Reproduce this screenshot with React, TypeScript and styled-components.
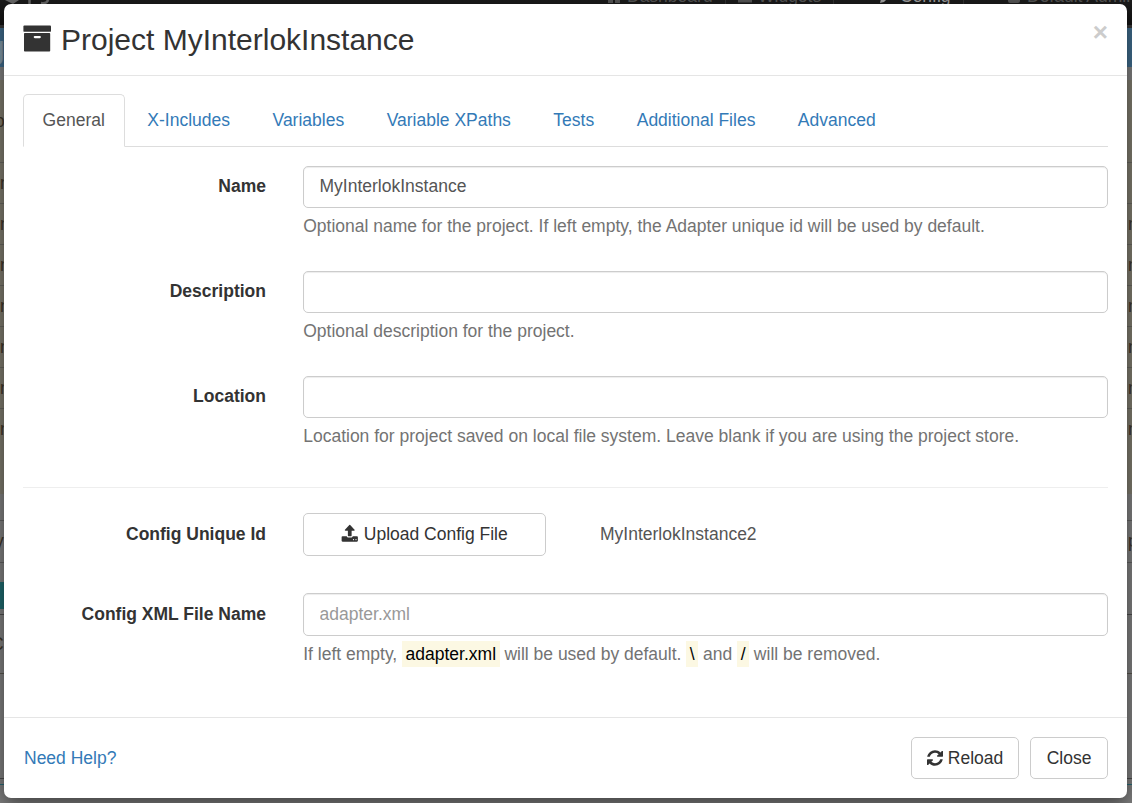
import React from "react";
import styled, { createGlobalStyle, css } from "styled-components";

const Global = createGlobalStyle`
  * { box-sizing: border-box; }
  html, body { margin: 0; overflow: hidden; }
  body { font: 17.5px/25px "Liberation Sans", Arial, sans-serif; color: #333; }
`;

const Screen = styled.div`
  position: relative;
  height: 803px;
  overflow: hidden;
  background: #7f7f7f;
`;

const Page = styled.div`
  display: flex;
  flex-direction: column;
  height: 803px;
`;

const Navbar = styled.nav`
  display: flex;
  justify-content: space-between;
  height: 25px;
  padding-left: 5px;
  background: linear-gradient(#1c1c1c, #131313);
  line-height: 25px;
`;

const NavItems = styled.div`
  display: flex;
  width: 525px;
  margin-top: -16px;
  white-space: nowrap;
`;

const NavItem = styled.span<{ $width: number; $active?: boolean }>`
  display: flex;
  flex: 0 0 ${(p) => p.$width}px;
  gap: 6px;
  color: ${(p) => (p.$active ? "#a0a0a0" : "#565656")};
`;

const NavIcon = styled.svg`
  flex: none;
  width: 14px;
  height: 20px;
  fill: currentColor;
`;

const Separator = styled.i`
  width: 1px;
  height: 25px;
  margin-left: 6px;
  background: #333;
`;

const Band = styled.div<{ $h: number; $bg?: string; $line?: string }>`
  display: flex;
  flex: none;
  align-items: center;
  justify-content: space-between;
  height: ${(p) => p.$h}px;
  overflow: hidden;
  background: ${(p) => p.$bg ?? "#7f7f7f"};
  color: #3c3428;
  ${(p) => p.$line && css`border-bottom: 1px solid ${p.$line};`}
`;

const Edge = styled.span<{ $light?: boolean; $shift?: number }>`
  width: 4px;
  margin-left: ${(p) => p.$shift ?? 0}px;
  overflow: visible;
  white-space: nowrap;
  ${(p) => p.$light && css`color: #8298a6; font-size: 32px;`}
`;

const Teal = styled.span`
  width: 5px;
  height: 27px;
  margin-top: 18px;
  background: #1f6a6e;
`;

const Modal = styled.section`
  position: absolute;
  top: 4px;
  left: 4px;
  display: flex;
  flex-direction: column;
  width: 1123px;
  height: 794px;
  border-radius: 7px;
  background: #fff;
  box-shadow: 0 6px 19px rgba(0, 0, 0, 0.5);
`;

const Header = styled.header`
  display: flex;
  align-items: flex-start;
  justify-content: space-between;
  height: 72px;
  padding: 18px 19px 0;
  border-bottom: 1px solid #e5e5e5;
`;

const Title = styled.h1`
  display: flex;
  align-items: center;
  gap: 10px;
  margin: 0;
  font-size: 30px;
  font-weight: 400;
  line-height: 35px;
`;

const CloseMark = styled.button`
  margin: -3px 0 0;
  padding: 0;
  border: 0;
  background: none;
  color: #ccc;
  font: bold 26px/26px "Liberation Sans", Arial, sans-serif;
`;

const Body = styled.main`
  flex: 1;
  padding: 18px 19px 0;
`;

const Tabs = styled.div`
  display: flex;
  gap: 2.5px;
  height: 53px;
  border-bottom: 1px solid #ddd;
`;

const Tab = styled.a<{ $active?: boolean }>`
  height: 53px;
  padding: 13px 19.4px 0 18.6px;
  border: 1px solid transparent;
  color: #337ab7;
  ${(p) =>
    p.$active &&
    css`
      border-color: #ddd;
      border-bottom-color: #fff;
      border-radius: 5px 5px 0 0;
      background: #fff;
      color: #555;
    `}
`;

const Row = styled.div<{ $h: number }>`
  display: grid;
  grid-template-columns: 243px 1fr;
  column-gap: 37px;
  height: ${(p) => p.$h}px;
`;

const Label = styled.label<{ $top?: number }>`
  padding-top: ${(p) => p.$top ?? 8}px;
  font-weight: 700;
  text-align: right;
`;

const Input = styled.input<{ $h?: number }>`
  display: block;
  width: 100%;
  height: ${(p) => p.$h ?? 42}px;
  padding: 0 15.5px ${(p) => (p.$h ? 1 : 2)}px;
  border: 1px solid #ccc;
  border-radius: 5px;
  background: #fff;
  box-shadow: inset 0 1px 1px rgba(0, 0, 0, 0.075);
  color: #555;
  font: inherit;
  &::placeholder { color: #999; opacity: 1; }
`;

const Help = styled.p`
  margin: 6px 0 0 0.2px;
  color: #737373;
  white-space: nowrap;
`;

const Mark = styled.mark`
  padding: 3px 3.5px;
  background: #fcf8e3;
  color: #000;
`;

const Rule = styled.hr`
  height: 1px;
  margin: 6px 0 25px;
  border: 0;
  background: #eee;
`;

const Form = styled.form`
  padding-top: 19px;
`;

const Button = styled.button<{ $w: number; $h?: number }>`
  display: flex;
  align-items: center;
  justify-content: center;
  gap: 5px;
  width: ${(p) => p.$w}px;
  height: ${(p) => p.$h ?? 42}px;
  padding: ${(p) => (p.$h ? "0 0 1px" : "1px 0 0")};
  border: 1px solid #ccc;
  border-radius: 5px;
  background: #fff;
  color: #333;
  font: inherit;
`;

const ButtonIcon = styled.svg`
  flex: none;
  margin-top: -2px;
  fill: currentColor;
`;

const TitleIcon = styled.svg`
  flex: none;
  margin-top: -1px;
  fill: #333;
`;

const Upload = styled.div`
  display: flex;
  align-items: flex-start;
  gap: 54px;
`;

const Value = styled.span`
  padding-top: 9px;
  color: #555;
`;

const Footer = styled.footer`
  display: flex;
  align-items: center;
  gap: 11px;
  height: 81px;
  padding: 0 19px 0 20px;
  border-top: 1px solid #e5e5e5;
`;

const HelpLink = styled.a`
  margin-right: auto;
  color: #337ab7;
`;

const ArchiveIcon = () => (
  <TitleIcon width="28" height="28" viewBox="0 0 28 28">
    <rect x="0.4" y="0.6" width="27.6" height="6.2" rx="0.9" />
    <path fillRule="evenodd" d="M1.8 8h24.600q.8 0 .8.8v17q0 .8-.8.8H1.800q-.8 0-.8-.8v-17Q1 8 1.800 8zm10 3q-1.100 0-1.100 1.100t1.100 1.100h5q1.100 0 1.100-1.100t-1.100-1.100z" />
  </TitleIcon>
);

const UploadIcon = () => (
  <ButtonIcon width="17.5" height="19" viewBox="0 0 1792 1792" preserveAspectRatio="none">
    <path d="M1344 1472q0-26-19-45t-45-19-45 19-19 45 19 45 45 19 45-19 19-45zm256 0q0-26-19-45t-45-19-45 19-19 45 19 45 45 19 45-19 19-45zm128-224v320q0 40-28 68t-68 28h-1472q-40 0-68-28t-28-68v-320q0-40 28-68t68-28h427q21 56 70.500 92t110.500 36h256q61 0 110.500-36t70.500-92h427q40 0 68 28t28 68zm-325-648q-17 40-59 40h-256v448q0 26-19 45t-45 19h-256q-26 0-45-19t-19-45v-448h-256q-42 0-59-40-17-39 14-69l448-448q18-19 45-19t45 19l448 448q31 30 14 69z" />
  </ButtonIcon>
);

const RefreshIcon = () => (
  <ButtonIcon width="16" height="18" viewBox="128 0 1536 1792" preserveAspectRatio="none">
    <path d="M1639 1056q0 5-1 7-64 268-268 434.500t-478 166.500q-146 0-282.500-55t-243.500-157l-129 129q-19 19-45 19t-45-19-19-45v-448q0-26 19-45t45-19h448q26 0 45 19t19 45-19 45l-137 137q71 66 161 102t187 36q134 0 250-65t186-179q11-17 53-117 8-23 30-23h192q13 0 22.500 9.500t9.500 22.500zm25-800v448q0 26-19 45t-45 19h-448q-26 0-45-19t-19-45 19-45l138-138q-148-137-349-137-134 0-250 65t-186 179q-11 17-53 117-8 23-30 23h-199q-13 0-22.500-9.500t-9.500-22.500v-7q65-268 270-434.500t480-166.500q146 0 284 55.500t245 156.500l130-129q19-19 45-19t45 19 19 45z" />
  </ButtonIcon>
);

const BrandMark = () => (
  <svg width="50" height="5" viewBox="0 0 50 5" fill="none" stroke="#686868">
    <path d="M0 0h14L8 4z" fill="#686868" stroke="none" />
    <path d="M24.500 0v4M43 0q-1 4-7 3" strokeWidth="2.500" />
  </svg>
);

const tabs = ["General", "X-Includes", "Variables", "Variable XPaths", "Tests", "Additional Files", "Advanced"];

const fields = [
  { label: "Name", value: "MyInterlokInstance", help: "Optional name for the project. If left empty, the Adapter unique id will be used by default." },
  { label: "Description", value: "", help: "Optional description for the project." },
  { label: "Location", value: "", help: "Location for project saved on local file system. Leave blank if you are using the project store." },
];

const olive = "#7e7a6d";
const rule = "#66645e";

export default function App() {
  return (
    <Screen>
      <Global />
      <Page>
        <Navbar>
          <BrandMark />
          <NavItems>
            <NavItem $width={131}>
              <NavIcon viewBox="0 0 14 20"><path d="M1 12h5v7H1zM8 12h5v7H8z" /></NavIcon>
              Dashboard<Separator />
            </NavItem>
            <NavItem $width={142}>
              <NavIcon viewBox="0 0 14 20"><path d="M0 12h14v6.500H0z" /></NavIcon>
              Widgets<Separator />
            </NavItem>
            <NavItem $width={127} $active>
              <NavIcon viewBox="0 0 14 20"><path d="M0 19l1-4 8-8 3 3-8 8z" /></NavIcon>
              Config<Separator />
            </NavItem>
            <NavItem $width={130}>
              <NavIcon viewBox="0 0 14 20"><path d="M1 12h12v5q0 2-2 2H3q-2 0-2-2z" /></NavIcon>
              Default Admin
            </NavItem>
          </NavItems>
        </Navbar>
        <Band $h={3} $bg="#383838" />
        <Band $h={39} $bg="#3f6b8b"><Edge $light $shift={-13}>g</Edge></Band>
        <Band $h={13} />
        <Band $h={83} $bg={olive} $line={rule}><Edge $shift={-5}>o</Edge></Band>
        {[0, 1, 2, 3, 4, 5, 6].map((i) => (
          <Band key={i} $h={41} $bg={olive} $line={i < 6 ? rule : undefined}>
            <Edge>n</Edge>
            {i > 0 && <Edge>n</Edge>}
          </Band>
        ))}
        <Band $h={44} $bg={olive} />
        <Band $h={27} $line="#606060" />
        <Band $h={42} $line="#606060"><Edge $shift={-5}>y</Edge><Edge>p</Edge></Band>
        <Band $h={46}><Teal /></Band>
        <Band $h={6} $line="#4c4c4c" />
        <Band $h={59} $line="#57544c"><Edge $shift={-9}>C</Edge></Band>
        <Band $h={105} $line="#4c4c4c" />
        <Band $h={6} $line="#286976" />
      </Page>
      <Modal>
        <Header>
          <Title><ArchiveIcon />Project MyInterlokInstance</Title>
          <CloseMark>×</CloseMark>
        </Header>
        <Body>
          <Tabs>
            {tabs.map((t, i) => <Tab key={t} $active={i === 0}>{t}</Tab>)}
          </Tabs>
          <Form>
            {fields.map((f) => (
              <Row $h={105} key={f.label}>
                <Label>{f.label}</Label>
                <div>
                  <Input defaultValue={f.value} />
                  <Help>{f.help}</Help>
                </div>
              </Row>
            ))}
            <Rule />
            <Row $h={80}>
              <Label $top={9}>Config Unique Id</Label>
              <Upload>
                <Button type="button" $w={243} $h={43}><UploadIcon />Upload Config File</Button>
                <Value>MyInterlokInstance2</Value>
              </Upload>
            </Row>
            <Row $h={80}>
              <Label $top={9}>Config XML File Name</Label>
              <div>
                <Input $h={43} placeholder="adapter.xml" />
                <Help>
                  If left empty, <Mark>adapter.xml</Mark> will be used by default. <Mark>\</Mark> and <Mark>/</Mark> will be removed.
                </Help>
              </div>
            </Row>
          </Form>
        </Body>
        <Footer>
          <HelpLink>Need Help?</HelpLink>
          <Button $w={108}><RefreshIcon />Reload</Button>
          <Button $w={78}>Close</Button>
        </Footer>
      </Modal>
    </Screen>
  );
}
